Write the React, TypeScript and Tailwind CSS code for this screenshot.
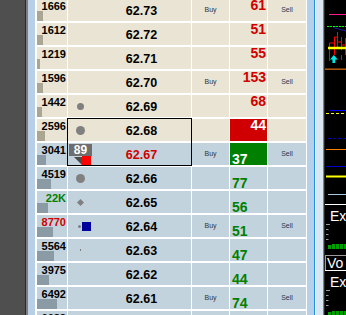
import React from 'react';

type Row = {
  vol: string;
  volW: number;
  volColor?: string;
  price: string;
  priceRed?: boolean;
  buy?: boolean;
  ask?: string;
  askBox?: boolean;
  bid?: string;
  bidBox?: boolean;
  dot?: number;
  square?: boolean;
  marker?: boolean;
  selected?: boolean;
  side: 'ask' | 'bid';
};

const rows: Row[] = [
  { vol: '1666', volW: 6, price: '62.73', buy: true, ask: '61', side: 'ask' },
  { vol: '1612', volW: 6, price: '62.72', ask: '51', side: 'ask' },
  { vol: '1219', volW: 3, price: '62.71', ask: '55', side: 'ask' },
  { vol: '1596', volW: 6, price: '62.70', buy: true, ask: '153', side: 'ask' },
  { vol: '1442', volW: 5, price: '62.69', ask: '68', dot: 7, side: 'ask' },
  { vol: '2596', volW: 8, price: '62.68', ask: '44', askBox: true, dot: 9, selected: true, side: 'ask' },
  { vol: '3041', volW: 9, price: '62.67', priceRed: true, buy: true, bid: '37', bidBox: true, marker: true, side: 'bid' },
  { vol: '4519', volW: 14, price: '62.66', bid: '77', dot: 9, side: 'bid' },
  { vol: '22K', volW: 11, volColor: 'green', price: '62.65', bid: '56', dot: 5, side: 'bid' },
  { vol: '8770', volW: 16, volColor: 'red', price: '62.64', buy: true, bid: '51', square: true, side: 'bid' },
  { vol: '5564', volW: 17, price: '62.63', bid: '47', dot: 1, side: 'bid' },
  { vol: '3975', volW: 12, price: '62.62', bid: '44', side: 'bid' },
  { vol: '6492', volW: 20, price: '62.61', buy: true, bid: '74', side: 'bid' },
  { vol: '6083', volW: 18, price: '62.60', bid: '62', side: 'bid' },
];

function DotArea({ r }: { r: Row }) {
  if (r.marker) {
    return (
      <div className="flex h-full w-[24px] shrink-0 flex-col pl-px pt-px">
        <div className="h-[12px] w-[23px] bg-[#6e6e6e] text-center text-[12px] font-bold leading-[12px] text-white">
          89
        </div>
        <div className="flex pl-[5px]">
          <svg width="8" height="9" viewBox="0 0 8 9" className="mt-px">
            <polygon points="0,0 8,0 8,8" fill="#4a4a4a" />
          </svg>
          <div className="h-[9px] w-[9px] bg-[#ff0000]" />
        </div>
      </div>
    );
  }
  if (r.square) {
    return (
      <div className="flex h-full w-[24px] shrink-0 items-center pl-[10px]">
        <div className="mt-px h-[3px] w-[3px] rounded-full bg-[#808080]" />
        <div className="ml-px h-[9px] w-[9px] bg-[#00009c]" />
      </div>
    );
  }
  return (
    <div className="flex h-full w-[24px] shrink-0 items-center justify-center">
      {r.dot === 9 && <div className="h-[9px] w-[9px] rounded-full bg-[#808080]" />}
      {r.dot === 7 && <div className="h-[7px] w-[7px] rounded-full bg-[#808080]" />}
      {r.dot === 5 && <div className="h-[5px] w-[5px] rotate-45 bg-[#808080]" />}
      {r.dot === 1 && <div className="h-[2px] w-px bg-[#808080]" />}
    </div>
  );
}

function TableRow({ r }: { r: Row }) {
  const cell = r.side === 'ask' ? 'bg-[#e9e4d3]' : 'bg-[#c3d3de]';
  const bar = r.side === 'ask' ? 'bg-[#aba692]' : 'bg-[#8b9ba6]';
  const volText =
    r.volColor === 'green' ? 'text-[#008000]' : r.volColor === 'red' ? 'text-[#d00000]' : 'text-black';
  return (
    <div className="flex h-[22px] shrink-0 gap-px">
      <div className={`flex w-[30px] shrink-0 flex-col ${cell}`}>
        <div className={`self-end pr-px pt-[2px] text-[11px] font-bold leading-[10px] ${volText}`}>{r.vol}</div>
        <div className={`mt-auto h-[10px] shrink-0 ${bar}`} style={{ width: r.volW }} />
      </div>
      <div className={`relative flex w-[123px] shrink-0 items-center ${cell}`}>
        <DotArea r={r} />
        <div
          className={`flex-1 pt-px text-center text-[12.5px] font-bold leading-[14px] ${
            r.priceRed ? 'text-[#d00000]' : 'text-black'
          }`}
        >
          {r.price}
        </div>
        {r.selected && (
          <div className="pointer-events-none absolute -left-px -right-px -top-px z-10 h-[48px] border border-black" />
        )}
      </div>
      <div className={`flex w-[37px] shrink-0 items-center justify-center text-[7px] text-[#333] ${cell}`}>
        {r.buy ? 'Buy' : ''}
      </div>
      {r.ask !== undefined ? (
        <div
          className={`flex w-[37px] shrink-0 justify-end pr-px text-[14px] font-bold leading-[13px] ${
            r.askBox ? 'bg-[#d00000] text-white' : `${cell} text-[#d00000]`
          }`}
        >
          {r.ask}
        </div>
      ) : (
        <div
          className={`flex w-[37px] shrink-0 pl-[2px] pt-[9px] text-[14px] font-bold leading-[13px] ${
            r.bidBox ? 'bg-[#008000] text-white' : `${cell} text-[#008000]`
          }`}
        >
          <span className="translate-y-px">{r.bid}</span>
        </div>
      )}
      <div className={`flex w-[38px] shrink-0 items-center justify-center text-[7px] text-[#2a3a55] ${cell}`}>
        {r.buy ? 'Sell' : ''}
      </div>
    </div>
  );
}

function Chart() {
  return (
    <svg width="21" height="204" viewBox="0 0 21 204" className="shrink-0">
      <line x1="4" y1="14.5" x2="21" y2="14.5" stroke="#ff1a8c" strokeWidth="1" />
      <line x1="2" y1="26.5" x2="21" y2="26.5" stroke="#00ff00" strokeWidth="1" strokeDasharray="2 1" />
      <line x1="8" y1="27.5" x2="21" y2="31" stroke="#1818a0" strokeWidth="1" />
      <g stroke="#ff0000" strokeWidth="1" fill="none">
        <polyline points="4.5,60 4.5,43 9.5,43" />
        <polyline points="9.5,55 9.5,37 12.5,37" />
        <polyline points="12.5,47 12.5,32" />
        <polyline points="12.5,42 16.5,42 16.5,37 16.5,50" />
        <polyline points="16.5,45 20.5,45 20.5,38 20.5,55" />
        <line x1="4.5" y1="55" x2="4.5" y2="61" />
        <line x1="16.5" y1="55" x2="16.5" y2="60" />
      </g>
      <line x1="3" y1="48" x2="21" y2="48" stroke="#ffff00" strokeWidth="2.5" />
      <polygon points="5,59.5 8.8,55 12.7,59.5 10.2,59.5 10.2,63 7.4,63 7.4,59.5" fill="#00e5e5" />
      <line x1="0" y1="69.2" x2="21" y2="69.2" stroke="#b85c10" strokeWidth="1.5" />
      <line x1="4" y1="110.5" x2="21" y2="110.5" stroke="#0000ff" strokeWidth="1" />
      <line x1="1" y1="113.5" x2="21" y2="113.5" stroke="#ffff00" strokeWidth="1" strokeDasharray="3 2" />
      <line x1="3" y1="138.5" x2="21" y2="138.5" stroke="#0000c8" strokeWidth="1" strokeDasharray="3 2" />
      <line x1="1" y1="149.5" x2="21" y2="149.5" stroke="#ff8000" strokeWidth="1" />
      <line x1="1" y1="166.5" x2="21" y2="166.5" stroke="#0000d0" strokeWidth="1" />
      <line x1="1" y1="176.5" x2="21" y2="176.5" stroke="#ffff00" strokeWidth="2" />
      <line x1="3" y1="194.5" x2="21" y2="194.5" stroke="#a8c8e0" strokeWidth="1" />
    </svg>
  );
}

function Ticks({ barsY }: { barsY: number }) {
  return (
    <svg width="21" height="46" viewBox="0 0 21 46" className="absolute left-0 top-0">
      <g stroke="#9a9a9a" strokeWidth="1">
        <line x1="1" y1="19.5" x2="5" y2="19.5" />
        <line x1="1" y1="24.5" x2="3.5" y2="24.5" />
        <line x1="1" y1="29.5" x2="3.5" y2="29.5" />
        <line x1="1" y1="34.5" x2="3.5" y2="34.5" />
      </g>
      <g fill="#00a000">
        <rect x="3" y={barsY + 1} width="3" height="4" />
        <rect x="7" y={barsY} width="3" height="5" />
        <rect x="11" y={barsY} width="3" height="5" />
        <rect x="15" y={barsY} width="3" height="5" />
        <rect x="19" y={barsY} width="2" height="5" />
      </g>
    </svg>
  );
}

export default function App() {
  return (
    <div className="flex h-[315px] w-[346px] overflow-hidden bg-black font-['Liberation_Sans',Arial,sans-serif]">
      <div className="w-[25px] shrink-0 bg-[#4f4f4f]" />
      <div className="w-px shrink-0 bg-[#2a2a2a]" />
      <div className="w-[2px] shrink-0 bg-[#7e7e7e]" />
      <div className="w-[7px] shrink-0 bg-[#b7cfe7]" />
      <div className="-mt-px flex shrink-0 flex-col gap-[2px] bg-white pl-[2px] pr-px">
        {rows.map((r) => (
          <TableRow key={r.price} r={r} />
        ))}
      </div>
      <div className="w-[7px] shrink-0 bg-[#b7d0e9]" />
      <div className="w-px shrink-0 bg-[#1e90e0]" />
      <div className="w-px shrink-0 bg-white" />
      <div className="w-[7px] shrink-0 bg-[#dae7f3]" />
      <div className="w-px shrink-0 bg-[#808080]" />
      <div className="w-px shrink-0 bg-[#262626]" />
      <div className="flex w-[21px] shrink-0 flex-col overflow-hidden bg-black">
        <Chart />
        <div className="relative h-[51px] shrink-0 border-t border-white pl-[5px] pt-[4px] text-[14px] leading-[14px] text-white">
          <Ticks barsY={39} />
          <span className="relative">Ex</span>
        </div>
        <div className="h-[15px] shrink-0 border-l border-t border-[#9a9a9a] pl-px text-[14px] leading-[14px] text-white">
          Vo
        </div>
        <div className="relative flex-1 border-t border-white pl-[5px] pt-[4px] text-[14px] leading-[14px] text-white">
          <Ticks barsY={40} />
          <span className="relative">Ex</span>
        </div>
      </div>
    </div>
  );
}
